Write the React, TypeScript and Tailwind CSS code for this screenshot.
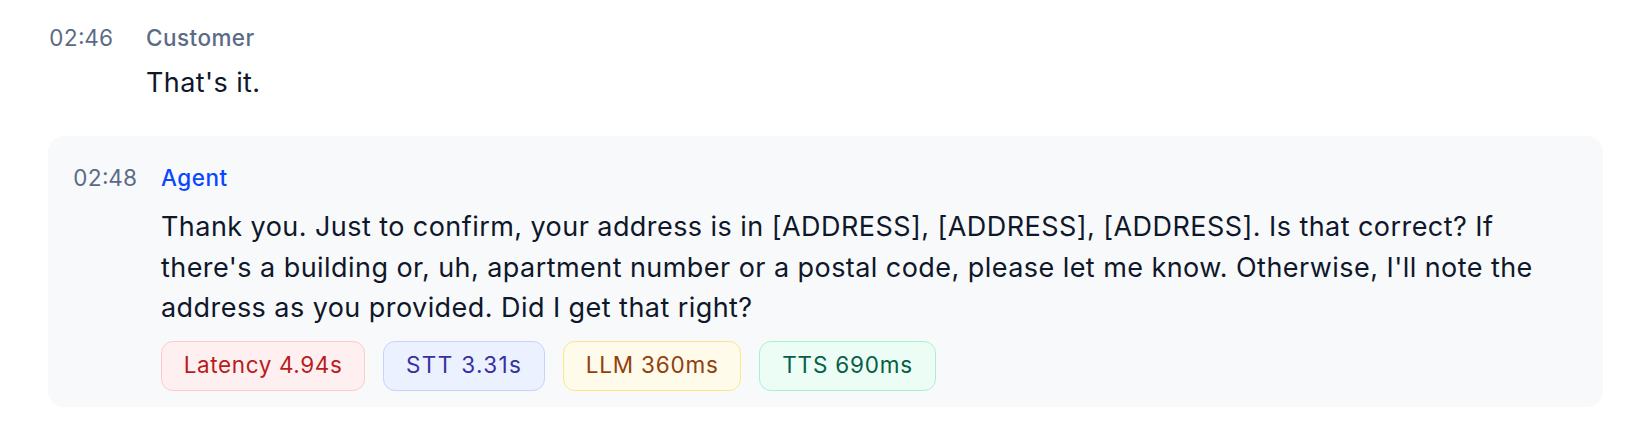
import React from "react";

const font = { fontFamily: "Inter, 'Noto Sans', sans-serif" };

function Badge({ label, cls }: { label: string; cls: string }) {
  return (
    <span
      className={`inline-flex h-[50px] items-center rounded-[12px] border-[1.5px] px-[21.8px] text-[22.5px] leading-none ${cls}`}
    >
      {label}
    </span>
  );
}

export default function App() {
  return (
    <div className="h-[432px] w-[1648px] overflow-hidden bg-white" style={font}>
      <div className="pl-[49px] pt-[21px]">
        <div className="flex items-start">
          <div className="w-[97px] shrink-0 text-[22.5px] leading-[33.75px] text-[#5b6b86] tabular-nums">02:46</div>
          <div className="min-w-0 flex-1">
            <div className="text-[22.5px] font-medium leading-[33.75px] tracking-[0.45px] text-[#5b6b86]">
              Customer
            </div>
            <div className="mt-[8px] text-[27px] leading-[40.5px] tracking-[0.4px] text-[#0f172a]">That's it.</div>
          </div>
        </div>
      </div>
      <div className="ml-[48px] mr-[45px] mt-[33px] rounded-[16px] bg-[#f8f9fb] pb-[16px] pl-[25px] pr-[24px] pt-[25px]">
        <div className="flex items-start">
          <div className="w-[88px] shrink-0 text-[22.5px] leading-[33.75px] text-[#5b6b86] tabular-nums">02:48</div>
          <div className="min-w-0 flex-1">
            <div className="text-[22.5px] font-medium leading-[33.75px] tracking-[0.5px] text-[#0a47ff]">Agent</div>
            <div className="mt-[12px] text-[27px] leading-[40.5px] tracking-[0.44px] text-[#0f172a]">
              Thank you. Just to confirm, your address is in [ADDRESS], [ADDRESS], [ADDRESS]. Is that correct? If
              there's a building or, uh, apartment number or a postal code, please let me know. Otherwise, I'll note
              the address as you provided. Did I get that right?
            </div>
            <div className="mt-[12px] flex gap-[18px]">
              <Badge label="Latency 4.94s" cls="tracking-[0.6px] border-[#fecaca] bg-[#fef0f0] text-[#b91c1c]" />
              <Badge label="STT 3.31s" cls="tracking-[1.35px] border-[#c7d2fe] bg-[#ecf1ff] text-[#3730a3]" />
              <Badge label="LLM 360ms" cls="tracking-[0.8px] border-[#fde68a] bg-[#fffbeb] text-[#92400e]" />
              <Badge label="TTS 690ms" cls="tracking-[0.8px] border-[#a7f3d0] bg-[#ecfdf5] text-[#065f46]" />
            </div>
          </div>
        </div>
      </div>
    </div>
  );
}
